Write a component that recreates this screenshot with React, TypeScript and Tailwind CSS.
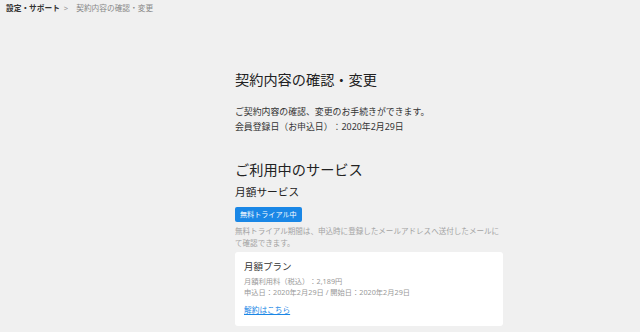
import React from "react";

export default function App() {
  return (
    <div
      className="min-h-[332px] w-full bg-[#f0f0f0] text-[#222] [text-spacing-trim:space-all]"
      style={{ fontFamily: '"Noto Sans", "Noto Sans CJK JP", sans-serif' }}
    >
      <div className="flex items-center pl-[6px] pt-[3px] text-[7.7px] leading-[10px]">
        <span className="font-bold text-[#333]">設定・サポート</span>
        <span className="ml-[4px] text-[#999]">&gt;</span>
        <span className="ml-[8px] text-[#888]">契約内容の確認・変更</span>
      </div>

      <div className="ml-[235px] w-[268px] pb-[6px]">
        <h1 className="mt-[57px] text-[14.2px] leading-[20px] font-normal text-[#222]">
          契約内容の確認・変更
        </h1>
        <div className="mt-[13.5px] text-[8.9px] leading-[15px] text-[#333]">
          <p>ご契約内容の確認、変更のお手続きができます。</p>
          <p>会員登録日（お申込日）：2020年2月29日</p>
        </div>

        <h2 className="mt-[26px] text-[14.2px] leading-[20px] font-normal text-[#222]">
          ご利用中のサービス
        </h2>
        <h3 className="mt-[4px] text-[10.7px] leading-[16px] font-normal text-[#222]">
          月額サービス
        </h3>
        <div className="mt-[7px] flex">
          <span className="flex h-[15px] items-center rounded-[2px] bg-[#1a87e6] px-[5px] text-[7.1px] text-white">
            無料トライアル中
          </span>
        </div>
        <p className="mt-[3px] text-[7.55px] leading-[12px] text-[#a3a3a3]">
          無料トライアル期間は、申込時に登録したメールアドレスへ送付したメールにて確認できます。
        </p>

        <div className="mt-[3px] rounded-[3px] bg-white px-[9px] pt-[8.5px] pb-[10px]">
          <div className="text-[9.5px] leading-[14px] text-[#333]">月額プラン</div>
          <div className="mt-[2px] text-[7.25px] leading-[11px] text-[#999]">
            <p>月額利用料（税込）：2,189円</p>
            <p>申込日：2020年2月29日 / 開始日：2020年2月29日</p>
          </div>
          <a
            href="#"
            className="mt-[5.5px] block w-fit text-[7.7px] leading-[12px] text-[#1a87e6] underline"
          >
            解約はこちら
          </a>
        </div>
      </div>
    </div>
  );
}
